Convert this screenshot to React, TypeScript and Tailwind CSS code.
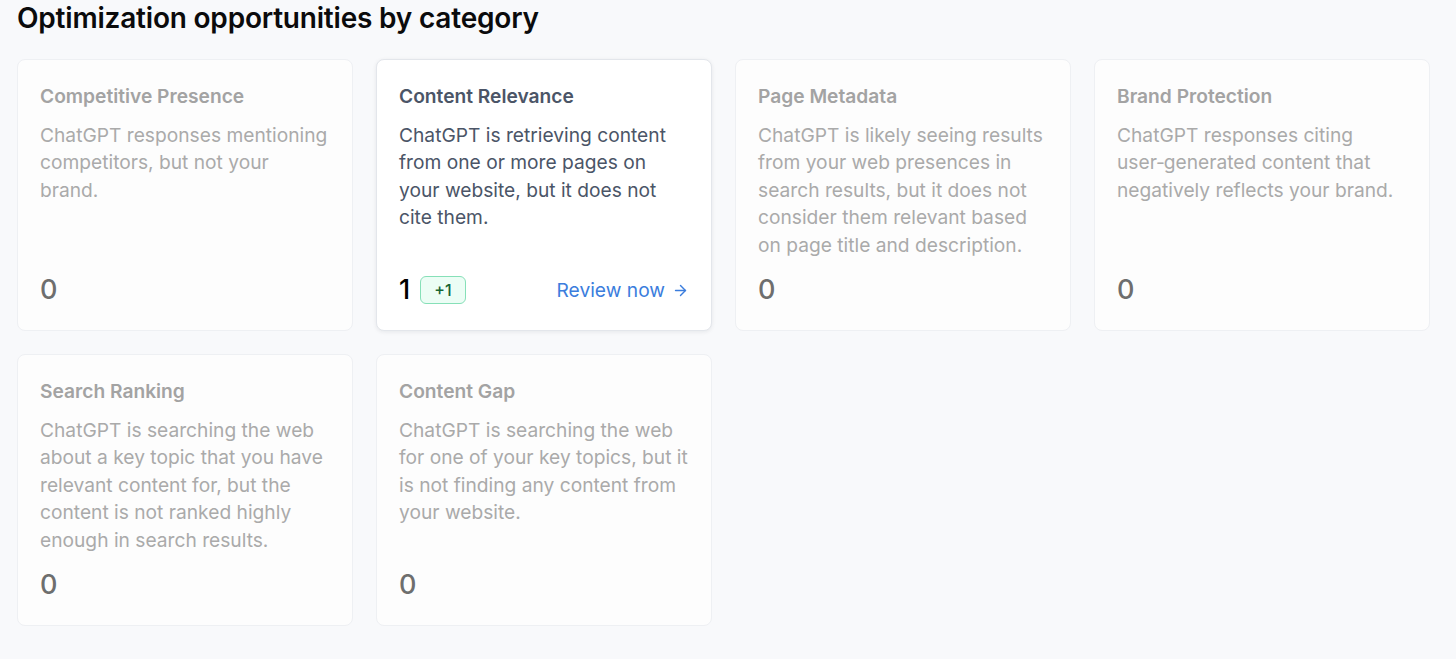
import { ArrowRight } from 'lucide-react'

type Category = {
  title: string
  description: string
  count: number
  delta?: number
}

const categories: Category[] = [
  {
    title: 'Competitive Presence',
    description: 'ChatGPT responses mentioning competitors, but not your brand.',
    count: 0,
  },
  {
    title: 'Content Relevance',
    description: 'ChatGPT is retrieving content from one or more pages on your website, but it does not cite them.',
    count: 1,
    delta: 1,
  },
  {
    title: 'Page Metadata',
    description:
      'ChatGPT is likely seeing results from your web presences in search results, but it does not consider them relevant based on page title and description.',
    count: 0,
  },
  {
    title: 'Brand Protection',
    // non-breaking hyphen keeps "user-generated" together
    description: 'ChatGPT responses citing user\u2011generated content that negatively reflects your brand.',
    count: 0,
  },
  {
    title: 'Search Ranking',
    description:
      'ChatGPT is searching the web about a key topic that you have relevant content for, but the content is not ranked highly enough in search results.',
    count: 0,
  },
  {
    title: 'Content Gap',
    description:
      'ChatGPT is searching the web for one of your key topics, but it is not finding any content from your website.',
    count: 0,
  },
]

function CategoryCard({ category }: { category: Category }) {
  const active = category.count > 0

  if (active) {
    return (
      <div className="flex flex-col rounded-lg border border-[#e3e6eb] bg-white px-[22px] pt-[23px] pb-[24px] shadow-[0_1px_4px_rgba(15,23,42,0.08)]">
        <h3 className="text-[19.2px] leading-[27px] font-semibold text-[#4b5567]">{category.title}</h3>
        <p className="mt-3 text-[19.2px] leading-[27.4px] text-[#4b5567]">{category.description}</p>
        <div className="mt-auto flex items-center justify-between pt-[15px]">
          <div className="flex items-center gap-[10px]">
            <span className="text-[27px] leading-8 font-medium text-black">{category.count}</span>
            <span className="rounded-md border border-[#86e0b8] bg-[#ecfdf5] px-[13px] py-[3px] text-[16px] leading-[20px] font-medium text-[#166534]">
              +{category.delta}
            </span>
          </div>
          <a className="flex items-center gap-[7px] text-[19.2px] text-[#3b7ddd]">
            Review now
            <ArrowRight size={17} strokeWidth={2} />
          </a>
        </div>
      </div>
    )
  }

  return (
    <div className="flex flex-col rounded-lg border border-[#eef0f3] bg-[#fdfdfd] px-[22px] pt-[23px] pb-[24px]">
      <h3 className="text-[19.2px] leading-[27px] font-semibold text-[#a3a3a3]">{category.title}</h3>
      <p className="mt-3 text-[19.2px] leading-[27.4px] text-[#aaaaaa]">{category.description}</p>
      <div className="mt-auto pt-[15px]">
        <span className="text-[27px] leading-8 font-medium text-[#6e6e6e]">{category.count}</span>
      </div>
    </div>
  )
}

export default function App() {
  return (
    <div className="min-h-screen bg-[#f8f9fb] px-[17px] font-['Inter','Liberation_Sans',sans-serif]">
      <h2 className="text-[28px] leading-9 font-semibold tracking-[-0.2px] text-[#0b0b0c]">
        Optimization opportunities by category
      </h2>
      <div className="mt-[23px] grid w-[1413px] grid-cols-4 gap-[23px]">
        {categories.map((c) => (
          <CategoryCard key={c.title} category={c} />
        ))}
      </div>
    </div>
  )
}
